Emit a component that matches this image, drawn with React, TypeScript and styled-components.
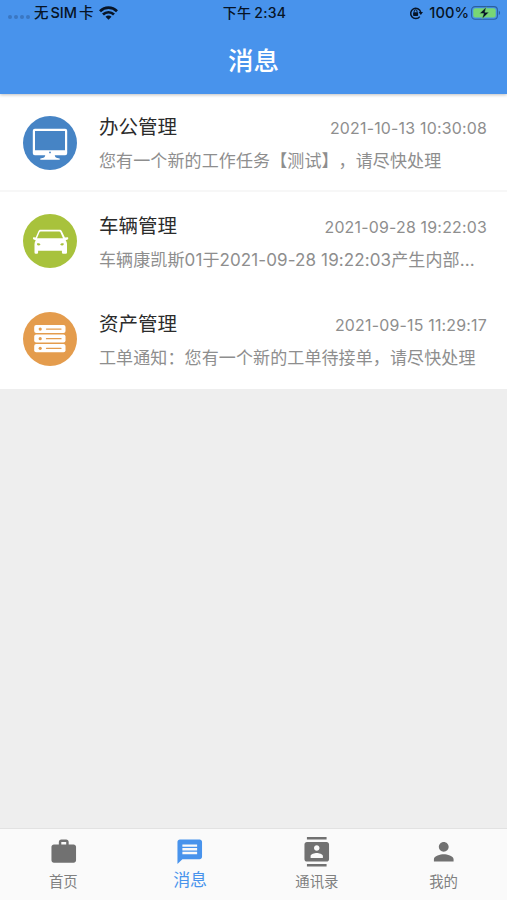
import React from 'react';
import styled, { createGlobalStyle } from 'styled-components';

const GlobalStyle = createGlobalStyle`
  * { box-sizing: border-box; }
  body { margin: 0; font-family: Inter, "Noto Sans CJK SC", sans-serif; text-spacing-trim: space-all; }
`;

const Screen = styled.div`
  width: 100%;
  height: 100vh;
  display: flex;
  flex-direction: column;
  background: #eee;
  overflow: hidden;
`;

const Header = styled.header`
  height: 94px;
  flex: none;
  display: flex;
  flex-direction: column;
  background: #4893ec;
  box-shadow: 0 1px 3px rgba(0, 0, 0, 0.25);
  z-index: 1;
`;

const StatusBar = styled.div`
  height: 26px;
  display: grid;
  grid-template-columns: 1fr auto 1fr;
  align-items: center;
  padding: 0 6px 0 8px;
  color: #071426;
  font-size: 14px;
  font-weight: 500;
  line-height: 26px;
  white-space: nowrap;
`;

const StatusGroup = styled.div<{ $end?: boolean }>`
  display: flex;
  align-items: center;
  justify-content: ${(p) => (p.$end ? 'flex-end' : 'flex-start')};
  svg { display: block; flex: none; }
`;

const Signal = styled.span`
  display: flex;
  gap: 2px;
  margin: 8px 4px 0 0;
`;

const Dot = styled.i`
  width: 4px;
  height: 4px;
  border-radius: 50%;
  background: #3a77c2;
`;

const Carrier = styled.span`
  display: flex;
  gap: 2px;
  margin-right: 5px;
  font-size: 14.5px;
`;

const Time = styled.span`
  display: flex;
  gap: 3px;
  letter-spacing: 0.25px;
`;

const Percent = styled.span`
  margin: 0 2px 0 6px;
  font-size: 14.7px;
`;

const Title = styled.h1`
  margin: 0;
  height: 68px;
  line-height: 69px;
  text-align: center;
  color: #fff;
  font-size: 25.5px;
  font-weight: 500;
`;

const List = styled.main`
  flex: 1;
`;

const Row = styled.article<{ $divided?: boolean }>`
  height: 98.3px;
  display: flex;
  align-items: center;
  padding: 1.5px 20px 0 23px;
  background: #fff;
  border-bottom: 2px solid ${(p) => (p.$divided ? '#f7f7f7' : '#fff')};
`;

const Avatar = styled.div<{ $color: string }>`
  width: 54px;
  height: 54px;
  flex: none;
  border-radius: 50%;
  background: ${(p) => p.$color};
  svg { display: block; }
`;

const Content = styled.div`
  flex: 1;
  min-width: 0;
  margin-left: 22px;
  padding-top: 3px;
`;

const RowHead = styled.div`
  display: flex;
  justify-content: space-between;
  align-items: center;
  height: 34px;
`;

const Name = styled.h2`
  margin: 0;
  font-size: 19.5px;
  font-weight: 400;
  line-height: 34px;
  color: #2b2b2b;
`;

const Stamp = styled.time`
  font-size: 15.9px;
  line-height: 34px;
  padding-top: 4px;
  letter-spacing: 0.21px;
  color: #8e8e8e;
`;

const Message = styled.p`
  margin: 0;
  height: 34px;
  line-height: 34px;
  font-size: 17.03px;
  letter-spacing: 0.1px;
  color: #8e8e8e;
  white-space: nowrap;
  overflow: hidden;
  text-overflow: ellipsis;
`;

const TabBar = styled.nav`
  height: 72px;
  flex: none;
  display: grid;
  grid-template-columns: repeat(4, 1fr);
  background: #fafafa;
  border-top: 1px solid #e2e2e2;
`;

const Tab = styled.a<{ $active?: boolean }>`
  display: flex;
  flex-direction: column;
  align-items: center;
  padding-top: 8px;
  color: ${(p) => (p.$active ? '#4893ec' : '#717171')};
  svg { display: block; flex: none; }
`;

const TabLabel = styled.span<{ $active?: boolean }>`
  font-size: ${(p) => (p.$active ? '17px' : '14.4px')};
  line-height: 24px;
  margin-top: ${(p) => (p.$active ? '1px' : '3px')};
  color: ${(p) => (p.$active ? '#4893ec' : '#808080')};
`;

const WifiIcon = () => (
  <svg width="19" height="14" viewBox="0 0 19 14">
    <g fill="none" stroke="#071426" strokeWidth="2.7">
      <path d="M1 5.2C5.8.5 13.2.5 18 5.2" />
      <path d="M4 8.5c3.1-3 7.9-3 11 0" />
    </g>
    <path d="M6.5 10.7c1.8-1.5 4.2-1.5 6 0l-3 3z" fill="#071426" />
  </svg>
);

const RotationLockIcon = () => (
  <svg width="14" height="14" viewBox="0 0 14 14">
    <path d="M10.8 10.6A5.1 5.1 0 1 1 11.7 6" fill="none" stroke="#071426" strokeWidth="1.5" />
    <path d="M9.6 6h4.4l-2.2 3z" fill="#071426" />
    <rect x="4.1" y="6.2" width="5" height="3.7" rx=".7" fill="#071426" />
    <path d="M5.2 6.4V5.2a1.4 1.4 0 0 1 2.8 0v1.2" fill="none" stroke="#071426" strokeWidth="1" />
  </svg>
);

const BatteryIcon = () => (
  <svg width="30" height="14" viewBox="0 0 30 14">
    <rect x=".6" y=".6" width="25.8" height="12.6" rx="3.5" fill="none" stroke="#2b609f" strokeWidth="1.1" />
    <rect x="2.3" y="2.2" width="22.4" height="9.4" rx="2" fill="#78d675" />
    <path d="M27.8 4.8c1.7.7 1.7 3.6 0 4.3z" fill="#2b609f" />
    <path d="M15.3 1 8.6 7.6h4L11.1 13l6.9-6.8h-4.1z" fill="#071426" stroke="#78d675" strokeWidth=".5" />
  </svg>
);

const MonitorIcon = () => (
  <svg width="54" height="54" viewBox="0 0 54 54">
    <path
      d="M11.8 12.8h30.4q2 0 2 2v22.4q0 2-2 2H31.8c.2 2 1.2 2.8 4.9 3.3v1.3H17.3v-1.3c3.7-.5 4.7-1.3 4.9-3.3H11.8q-2 0-2-2V14.8q0-2 2-2zm.2 2.1v19.3h30V14.9z"
      fill="#fff"
      fillRule="evenodd"
    />
    <circle cx="27" cy="36.4" r=".9" fill="#4684c5" />
  </svg>
);

const CarIcon = () => (
  <svg width="54" height="54" viewBox="0 0 54 54">
    <path
      d="M17.5 15.8h19c1.3 0 2 .5 2.5 1.6l2.9 6.1 2.8-.3c.6 0 .9 1.9-.1 2.3l-2 .7c1 1.2 1.4 2.5 1.4 4.1v8.2q0 1.2-1.2 1.2h-2.7q-1.2 0-1.2-1.2v-1.8H15.1v1.8q0 1.2-1.2 1.2h-1.2q-1.2 0-1.2-1.2v-8.2c0-1.6.4-2.9 1.2-4.1l-2-.7c-1-.4-.9-2.3-.2-2.3l2.2.3 2.6-6.1c.5-1.1 1.1-1.6 2.2-1.6zm.3 1.6c-.7 0-1 .3-1.3.9L14 24.3h26l-2.6-6c-.3-.6-.6-.9-1.3-.9z"
      fill="#fff"
      fillRule="evenodd"
    />
    <path d="M14 29.4c1.7-.3 3 .2 3.5 1.2-.7 1.1-3 1.3-3.5 0zm26.7 0c-1.7-.3-3 .2-3.5 1.2.7 1.1 3 1.3 3.5 0z" fill="#a8c23c" />
  </svg>
);

const ServerIcon = () => (
  <svg width="54" height="54" viewBox="0 0 54 54">
    {[12.9, 22.5, 32.1].map((y) => (
      <g key={y}>
        <rect x="11.2" y={y} width="31.3" height="8.1" rx="2" fill="#fff" />
        <circle cx="17.2" cy={y + 4.2} r="1.6" fill="#e49c4d" />
        <path d={`M23.5 ${y + 4.2}h14.5`} stroke="#e49c4d" strokeWidth="1.3" strokeLinecap="round" />
      </g>
    ))}
  </svg>
);

const tabs = [
  {
    label: '首页',
    path: 'M20 6h-4V4c0-1.11-.89-2-2-2h-4c-1.11 0-2 .89-2 2v2H4c-1.11 0-2 .89-2 2v11c0 1.11.89 2 2 2h16c1.11 0 2-.89 2-2V8c0-1.11-.89-2-2-2zm-6 0h-4V4h4v2z',
  },
  {
    label: '消息',
    active: true,
    path: 'M20 2H4c-1.1 0-2 .9-2 2v18l4-4h14c1.1 0 2-.9 2-2V4c0-1.1-.9-2-2-2zm-2 12H6v-2h12v2zm0-3H6V9h12v2zm0-3H6V6h12v2z',
  },
  {
    label: '通讯录',
    path: 'M20 0H4v2h16V0zM4 24h16v-2H4v2zM20 4H4c-1.1 0-2 .9-2 2v12c0 1.1.9 2 2 2h16c1.1 0 2-.9 2-2V6c0-1.1-.9-2-2-2zm-8 2.75c1.24 0 2.25 1.01 2.25 2.25s-1.01 2.25-2.25 2.25S9.75 10.24 9.75 9 10.76 6.75 12 6.75zM17 17H7v-1.5c0-1.67 3.33-2.5 5-2.5s5 .83 5 2.5V17z',
  },
  {
    label: '我的',
    path: 'M12 12c2.21 0 4-1.79 4-4s-1.79-4-4-4-4 1.79-4 4 1.79 4 4 4zm0 2c-2.67 0-8 1.34-8 4v2h16v-2c0-2.66-5.33-4-8-4z',
  },
];

const messages = [
  {
    name: '办公管理',
    time: '2021-10-13 10:30:08',
    text: '您有一个新的工作任务【测试】，请尽快处理',
    color: '#4684c5',
    icon: <MonitorIcon />,
    divided: true,
  },
  {
    name: '车辆管理',
    time: '2021-09-28 19:22:03',
    text: '车辆康凯斯01于2021-09-28 19:22:03产生内部...',
    color: '#a8c23c',
    icon: <CarIcon />,
  },
  {
    name: '资产管理',
    time: '2021-09-15 11:29:17',
    text: '工单通知：您有一个新的工单待接单，请尽快处理',
    color: '#e49c4d',
    icon: <ServerIcon />,
  },
];

export default function App() {
  return (
    <Screen lang="zh-CN">
      <GlobalStyle />
      <Header>
        <StatusBar>
          <StatusGroup>
            <Signal><Dot /><Dot /><Dot /><Dot /></Signal>
            <Carrier><span>无</span><span>SIM</span><span>卡</span></Carrier>
            <WifiIcon />
          </StatusGroup>
          <Time><span>下午</span><span>2:34</span></Time>
          <StatusGroup $end>
            <RotationLockIcon />
            <Percent>100%</Percent>
            <BatteryIcon />
          </StatusGroup>
        </StatusBar>
        <Title>消息</Title>
      </Header>
      <List>
        {messages.map((m) => (
          <Row key={m.name} $divided={m.divided}>
            <Avatar $color={m.color}>{m.icon}</Avatar>
            <Content>
              <RowHead>
                <Name>{m.name}</Name>
                <Stamp>{m.time}</Stamp>
              </RowHead>
              <Message>{m.text}</Message>
            </Content>
          </Row>
        ))}
      </List>
      <TabBar>
        {tabs.map((t) => (
          <Tab key={t.label} $active={t.active}>
            <svg width="29.5" height="29.5" viewBox="0 0 24 24" fill="currentColor"><path d={t.path} /></svg>
            <TabLabel $active={t.active}>{t.label}</TabLabel>
          </Tab>
        ))}
      </TabBar>
    </Screen>
  );
}
